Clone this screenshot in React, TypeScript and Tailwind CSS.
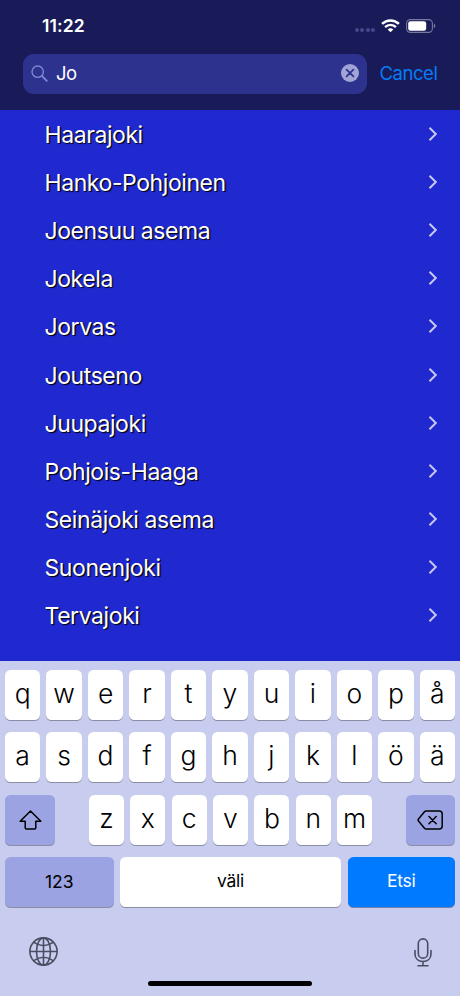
import type { ReactNode } from 'react';

const stations = [
  'Haarajoki',
  'Hanko-Pohjoinen',
  'Joensuu asema',
  'Jokela',
  'Jorvas',
  'Joutseno',
  'Juupajoki',
  'Pohjois-Haaga',
  'Seinäjoki asema',
  'Suonenjoki',
  'Tervajoki',
];

const topKeys = ['q', 'w', 'e', 'r', 't', 'y', 'u', 'i', 'o', 'p', 'å'];
const homeKeys = ['a', 's', 'd', 'f', 'g', 'h', 'j', 'k', 'l', 'ö', 'ä'];
const bottomKeys = ['z', 'x', 'c', 'v', 'b', 'n', 'm'];

function StatusBar() {
  return (
    <div className="flex h-[54px] items-start justify-between pt-[15px] pr-6 pl-[42px]">
      <span className="text-[17.5px] leading-[22px] font-semibold tracking-[0.1px]">11:22</span>
      <div className="flex h-[21px] items-center">
        <div className="mt-[9px] mr-[6px] flex gap-[1.5px]">
          {[0, 1, 2, 3].map((dot) => (
            <span key={dot} className="size-[4px] rounded-full bg-[#47468a]" />
          ))}
        </div>
        <svg className="mr-[6px] h-[14px] w-[19px]" viewBox="0 0 19 14" fill="none" stroke="white">
          <path d="M1.1 4.9a12 12 0 0 1 16.8 0" strokeWidth="2.6" />
          <path d="M4.1 8.1a7.7 7.7 0 0 1 10.8 0" strokeWidth="2.4" />
          <path d="M9.5 13.3 6.7 10.6a4 4 0 0 1 5.6 0Z" fill="white" stroke="none" />
        </svg>
        <svg className="h-[14px] w-[30px]" viewBox="0 0 30 14" fill="none">
          <rect x=".6" y=".6" width="25.8" height="12.8" rx="3.8" stroke="#77779f" strokeWidth="1.1" />
          <rect x="2.2" y="2.2" width="18" height="9.6" rx="2.2" fill="white" />
          <path d="M27.8 4.8c2 .7 2 3.7 0 4.4Z" fill="#77779f" />
        </svg>
      </div>
    </div>
  );
}

function SearchBar() {
  return (
    <div className="flex h-10 items-center pl-[23px]">
      <div className="flex h-10 w-[343.5px] items-center rounded-[11px] bg-[#2d328f] px-[8px] pb-[2px]">
        <svg className="size-[17px]" viewBox="0 0 17 17" fill="none" stroke="#8287d0" strokeLinecap="round">
          <circle cx="6.7" cy="6.7" r="5.7" strokeWidth="1.4" />
          <path d="m11 11 4.8 4.8" strokeWidth="1.8" />
        </svg>
        <span className="ml-[8px] flex-1 text-[18.5px] leading-6 tracking-[-0.5px]">Jo</span>
        <svg className="size-[18px]" viewBox="0 0 18 18">
          <circle cx="9" cy="9" r="9" fill="#a1a4d5" />
          <path d="m5.6 5.6 6.8 6.8m0-6.8-6.8 6.8" stroke="#2d328f" strokeWidth="1.7" strokeLinecap="round" />
        </svg>
      </div>
      <span className="ml-[13px] pb-[2px] text-[18.5px] leading-6 tracking-[-0.45px] text-[#087cf6]">Cancel</span>
    </div>
  );
}

function StationList() {
  return (
    <ul className="h-[551px] bg-[#2028d0] pt-px">
      {stations.map((name) => (
        <li key={name} className="flex h-[48.1px] items-center justify-between pr-[22px] pl-[44.5px]">
          <span className="text-[23px] leading-[30px] tracking-[-0.42px] [text-shadow:1.2px_1.2px_1px_#000]">
            {name}
          </span>
          <svg className="mb-[2px] h-[14px] w-[10px]" viewBox="0 0 10 14" fill="none" stroke="#c4c8f5" strokeWidth="2">
            <path d="m1.5.8 6.3 6.2-6.3 6.2" />
          </svg>
        </li>
      ))}
    </ul>
  );
}

function Key({ children }: { children: ReactNode }) {
  return (
    <div className="flex h-[50px] min-w-0 items-center justify-center rounded-[5.5px] bg-white pb-[4px] text-[26.5px] leading-8 font-light shadow-[0_1px_0_#8b8da5]">
      {children}
    </div>
  );
}

function Keyboard() {
  return (
    <div className="h-[335px] bg-[#c8ccee] px-[5px] pt-[9px] text-black">
      <div className="grid grid-cols-11 gap-x-[6.2px] gap-y-[12.3px]">
        {[...topKeys, ...homeKeys].map((key) => (
          <Key key={key}>{key}</Key>
        ))}
      </div>

      <div className="mt-[12.3px] flex justify-between">
        <div className="flex h-[50px] w-[49.5px] items-center justify-center rounded-[5.5px] bg-[#9ba3e3] shadow-[0_1px_0_#8b8da5]">
          <svg className="mt-px ml-px h-[20px] w-[23px]" viewBox="0 0 23 20" fill="none" stroke="black" strokeWidth="1.5" strokeLinejoin="round">
            <path d="M11.5 1 1.2 11.3h5v6.5q0 1.2 1.2 1.2h8.2q1.2 0 1.2-1.2v-6.5h5Z" />
          </svg>
        </div>
        <div className="ml-px grid w-[283.5px] grid-cols-7 gap-[6.2px]">
          {bottomKeys.map((key) => (
            <Key key={key}>{key}</Key>
          ))}
        </div>
        <div className="flex h-[50px] w-[49.5px] items-center justify-center rounded-[5.5px] bg-[#9ba3e3] shadow-[0_1px_0_#8b8da5]">
          <svg className="h-[20px] w-[26px]" viewBox="0 0 26 20" fill="none" stroke="black" strokeWidth="1.5" strokeLinejoin="round">
            <path d="M9.2 1h13q3 0 3 3v12q0 3-3 3h-13q-1 0-1.7-.8L1.5 11q-.8-1 0-2l6-7.2Q8.2 1 9.2 1Z" />
            <path d="m12 6.5 7.2 7.2m0-7.2L12 13.7" strokeLinecap="round" />
          </svg>
        </div>
      </div>

      <div className="mt-[12.3px] flex h-[50px] gap-[6.5px] text-[17.5px] leading-6">
        <div className="flex w-[108.5px] items-center justify-center rounded-[5.5px] bg-[#9ba3e3] shadow-[0_1px_0_#8b8da5]">123</div>
        <div className="flex flex-1 items-center justify-center rounded-[5.5px] bg-white pb-[2px] tracking-[-0.3px] shadow-[0_1px_0_#8b8da5]">väli</div>
        <div className="flex w-[107.5px] items-center justify-center rounded-[5.5px] bg-[#007aff] pb-[2px] tracking-[-0.2px] text-white shadow-[0_1px_0_#6f7fae]">Etsi</div>
      </div>

      <div className="flex justify-between pt-[30px] pr-[23px] pl-[24px]">
        <svg className="size-[29px]" viewBox="0 0 29 29" fill="none" stroke="#484f63" strokeWidth="1.6">
          <circle cx="14.5" cy="14.5" r="13.6" />
          <ellipse cx="14.5" cy="14.5" rx="7" ry="13.6" />
          <path d="M14.5.9v27.2M.9 14.5h27.2M4.4 5.2q10.1 7 20.2 0M4.4 23.8q10.1-7 20.2 0" />
        </svg>
        <svg className="mt-[1.5px] h-[29px] w-[18px]" viewBox="0 0 18 29" fill="none" stroke="#484f63" strokeWidth="1.6" strokeLinecap="round">
          <rect x="4.3" y=".9" width="9.4" height="19.2" rx="4.7" />
          <path d="M1 12.5V16c0 4.6 3.3 7.5 8 7.5s8-2.9 8-7.5v-3.5M9 23.5v4.2M4 27.7h10" />
        </svg>
      </div>
      <div className="mx-auto mt-[13.5px] h-[5.5px] w-[164px] rounded-full bg-black" />
    </div>
  );
}

export default function App() {
  return (
    <main className="h-[996px] w-[460px] overflow-hidden bg-[#191b58] font-['Inter','Liberation_Sans',sans-serif] text-white">
      <header className="h-[110px]">
        <StatusBar />
        <SearchBar />
      </header>
      <StationList />
      <Keyboard />
    </main>
  );
}
